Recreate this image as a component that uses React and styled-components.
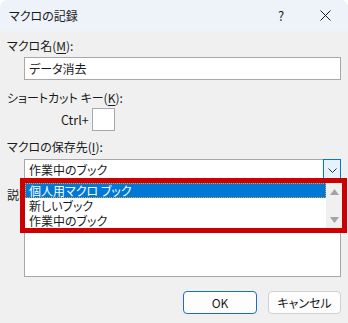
import React from 'react';
import styled, { createGlobalStyle } from 'styled-components';

const Global = createGlobalStyle`
  html, body { margin: 0; padding: 0; background: #ffffff; }
  body {
    font-family: "Noto Sans CJK JP", "Noto Sans", sans-serif;
    font-size: 12px;
    font-feature-settings: "palt";
    color: #1a1a1a;
  }
`;

const Window = styled.div`
  position: relative;
  width: 348px;
  height: 323px;
  background: #f0f0f0;
  border-radius: 8px 8px 0 0;
  overflow: hidden;
`;

const TitleBar = styled.div`
  height: 31px;
  display: flex;
  align-items: center;
  background: #eef3f9;
  padding-left: 9px;
`;

const Title = styled.div`
  flex: 1;
  font-size: 12px;
`;

const TitleButton = styled.div`
  width: ${p => p.$w}px;
  display: flex;
  justify-content: center;
  align-items: center;
  font-size: 13px;
`;

const Body = styled.div`
  padding: 0 7px;
`;

const Label = styled.div`
  height: 16px;
  line-height: 16px;
  margin-top: ${p => p.$mt}px;
  white-space: nowrap;
  u { text-decoration: underline; text-underline-offset: 2px; }
`;

const TextBox = styled.div`
  box-sizing: border-box;
  margin: ${p => p.$mt}px 0 0 17px;
  width: 317px;
  height: ${p => p.$h}px;
  background: #ffffff;
  border: 1px solid #a8a8a8;
  padding: 2px 4px;
  line-height: 17px;
`;

const CtrlRow = styled.div`
  display: flex;
  align-items: center;
  gap: 3px;
  margin-top: 2px;
  padding-left: 54px;
  font-size: 12.5px;
`;

const KeyBox = styled.div`
  box-sizing: border-box;
  width: 23px;
  height: 23px;
  background: #ffffff;
  border: 1px solid #a8a8a8;
`;

const Select = styled.div`
  box-sizing: border-box;
  display: flex;
  margin: 4px 0 0 17px;
  width: 317px;
  height: 22px;
  background: #ffffff;
  border: 1px solid #a8a8a8;
`;

const SelectText = styled.div`
  flex: 1;
  padding: 0 4px;
  line-height: 20px;
`;

const SelectButton = styled.div`
  width: 16px;
  background: #e5f1fb;
  border: 1px solid #0078d7;
  margin: -1px -1px -1px 0;
  display: flex;
  justify-content: center;
  align-items: center;
`;

const Buttons = styled.div`
  display: flex;
  justify-content: flex-end;
  gap: 11px;
  margin-top: 14px;
`;

const Button = styled.div`
  box-sizing: border-box;
  width: ${p => p.$w}px;
  height: 23px;
  display: flex;
  align-items: center;
  justify-content: center;
  background: #fdfdfd;
  border: 1px solid ${p => (p.$primary ? '#1a6fc4' : '#d0d0d0')};
  border-radius: 4px;
  font-size: 12px;
`;

const DropList = styled.div`
  position: absolute;
  left: 20px;
  top: 178px;
  width: 327px;
  height: 55px;
  box-sizing: border-box;
  border: 5px solid #cc0000;
  background: #ffffff;
  display: flex;
`;

const Options = styled.div`
  flex: 1;
`;

const Option = styled.div`
  box-sizing: border-box;
  height: 15px;
  line-height: 14px;
  padding: 0 3px;
  white-space: nowrap;
  color: ${p => (p.$selected ? '#ffffff' : '#1a1a1a')};
  background: ${p => (p.$selected ? '#0078d7' : 'transparent')};
  border: 1px dotted ${p => (p.$selected ? '#f0a030' : 'transparent')};
`;

const ScrollBar = styled.div`
  width: 16px;
  background: #f0f0f0;
  display: flex;
  flex-direction: column;
  justify-content: space-between;
  align-items: center;
  padding: 6px 0 5px;
`;

const Arrow = ({ down }) => (
  <svg width="9" height="6" viewBox="0 0 9 6">
    <path d={down ? 'M0 0 L9 0 L4.5 6 Z' : 'M0 6 L9 6 L4.5 0 Z'} fill="#a3a3a3" />
  </svg>
);

export default function App() {
  return (
    <Window>
      <Global />
      <TitleBar>
        <Title>マクロの記録</Title>
        <TitleButton $w={42}>?</TitleButton>
        <TitleButton $w={46}>
          <svg width="11" height="11" viewBox="0 0 11 11">
            <path d="M0.5 0.5 L10.5 10.5 M10.5 0.5 L0.5 10.5" stroke="#1a1a1a" strokeWidth="1" />
          </svg>
        </TitleButton>
      </TitleBar>
      <Body>
        <Label $mt={7}>マクロ名(<u>M</u>):</Label>
        <TextBox $mt={3} $h={23}>データ消去</TextBox>
        <Label $mt={10}>ショートカット キー(<u>K</u>):</Label>
        <CtrlRow>
          <span>Ctrl+</span>
          <KeyBox />
        </CtrlRow>
        <Label $mt={8}>マクロの保存先(<u>I</u>):</Label>
        <Select>
          <SelectText>作業中のブック</SelectText>
          <SelectButton>
            <svg width="9" height="5" viewBox="0 0 9 5">
              <path d="M0.5 0.5 L4.5 4.5 L8.5 0.5" fill="none" stroke="#333" strokeWidth="1" />
            </svg>
          </SelectButton>
        </Select>
        <Label $mt={6}>説明(<u>D</u>):</Label>
        <TextBox $mt={2} $h={72} />
        <Buttons>
          <Button $w={74} $primary>OK</Button>
          <Button $w={73}>キャンセル</Button>
        </Buttons>
      </Body>
      <DropList>
        <Options>
          <Option $selected>個人用マクロ ブック</Option>
          <Option>新しいブック</Option>
          <Option>作業中のブック</Option>
        </Options>
        <ScrollBar>
          <Arrow />
          <Arrow down />
        </ScrollBar>
      </DropList>
    </Window>
  );
}
